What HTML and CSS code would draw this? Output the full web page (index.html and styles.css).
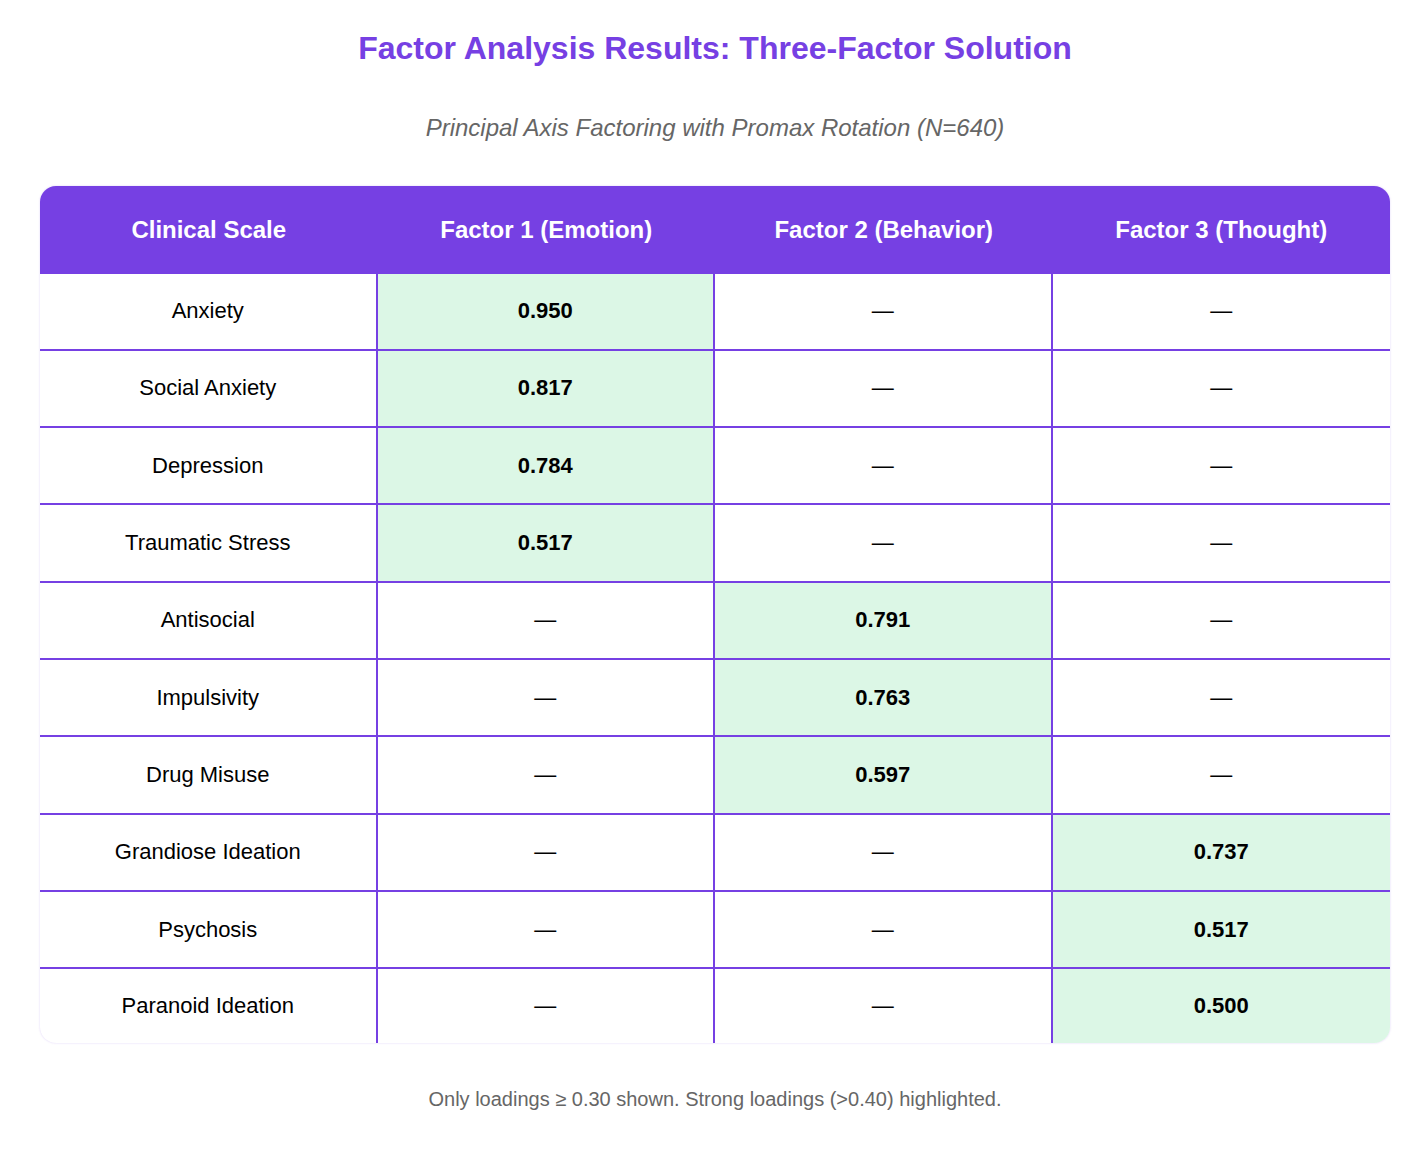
FILE: index.html
```html
<!DOCTYPE html>
<html lang="en">
<head>
<meta charset="utf-8">
<title>Factor Analysis Results</title>
<link rel="stylesheet" href="styles.css">
</head>
<body>
<div class="page">
  <h1 class="title">Factor Analysis Results: Three-Factor Solution</h1>
  <p class="subtitle">Principal Axis Factoring with Promax Rotation (N=640)</p>
  <div class="table-wrap">
    <table class="loadings">
      <thead>
        <tr>
          <th>Clinical Scale</th>
          <th>Factor 1 (Emotion)</th>
          <th>Factor 2 (Behavior)</th>
          <th>Factor 3 (Thought)</th>
        </tr>
      </thead>
      <tbody>
        <tr><td>Anxiety</td><td class="hi">0.950</td><td>—</td><td>—</td></tr>
        <tr><td>Social Anxiety</td><td class="hi">0.817</td><td>—</td><td>—</td></tr>
        <tr><td>Depression</td><td class="hi">0.784</td><td>—</td><td>—</td></tr>
        <tr><td>Traumatic Stress</td><td class="hi">0.517</td><td>—</td><td>—</td></tr>
        <tr><td>Antisocial</td><td>—</td><td class="hi">0.791</td><td>—</td></tr>
        <tr><td>Impulsivity</td><td>—</td><td class="hi">0.763</td><td>—</td></tr>
        <tr><td>Drug Misuse</td><td>—</td><td class="hi">0.597</td><td>—</td></tr>
        <tr><td>Grandiose Ideation</td><td>—</td><td>—</td><td class="hi">0.737</td></tr>
        <tr><td>Psychosis</td><td>—</td><td>—</td><td class="hi">0.517</td></tr>
        <tr><td>Paranoid Ideation</td><td>—</td><td>—</td><td class="hi">0.500</td></tr>
      </tbody>
    </table>
  </div>
  <p class="note">Only loadings ≥ 0.30 shown. Strong loadings (&gt;0.40) highlighted.</p>
</div>
</body>
</html>
```

FILE: styles.css
```css
html, body {
  margin: 0;
  padding: 0;
  background: #ffffff;
}

body {
  font-family: "Liberation Sans", Arial, Helvetica, sans-serif;
  color: #000000;
}

.page {
  padding: 28px 32px 40px 40px;
}

.title {
  margin: 0;
  text-align: center;
  font-size: 32px;
  font-weight: bold;
  line-height: 40px;
  color: #7640e3;
}

.subtitle {
  margin: 45px 0 0 0;
  text-align: center;
  font-size: 24px;
  font-style: italic;
  line-height: 30px;
  color: #666666;
}

.table-wrap {
  margin-top: 43px;
  width: 1350px;
  border-radius: 16px;
  overflow: hidden;
  box-shadow: 0 0 2px rgba(118, 64, 227, 0.25);
}

.loadings {
  width: 100%;
  border-collapse: separate;
  border-spacing: 0;
  table-layout: fixed;
}

.loadings th {
  background: #7640e3;
  color: #ffffff;
  font-size: 24px;
  font-weight: bold;
  height: 87.5px;
  padding: 0;
  text-align: center;
  vertical-align: middle;
}

.loadings td {
  height: 75.3px;
  padding: 0;
  text-align: center;
  vertical-align: middle;
  font-size: 22px;
  border-bottom: 2px solid #7640e3;
}

.loadings td:not(:last-child) {
  border-right: 2px solid #7640e3;
}

.loadings tbody tr:last-child td {
  border-bottom: none;
  height: 74px;
}

.loadings td.hi {
  background: #dcf7e6;
  font-weight: bold;
}

.note {
  margin: 43px 0 0 0;
  text-align: center;
  font-size: 20px;
  line-height: 26px;
  color: #666666;
}
```
